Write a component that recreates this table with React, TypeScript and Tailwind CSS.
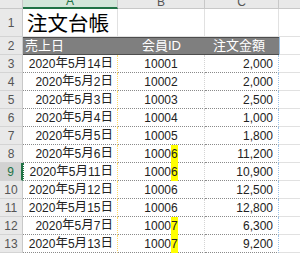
import React from 'react';

interface Order {
  date: string;
  id: string;
  mark?: boolean;
  amount: string;
}

const orders: Order[] = [
  { date: '2020年5月14日', id: '10001', amount: '2,000' },
  { date: '2020年5月2日', id: '10002', amount: '2,000' },
  { date: '2020年5月3日', id: '10003', amount: '2,500' },
  { date: '2020年5月4日', id: '10004', amount: '1,000' },
  { date: '2020年5月5日', id: '10005', amount: '1,800' },
  { date: '2020年5月6日', id: '10006', mark: true, amount: '11,200' },
  { date: '2020年5月11日', id: '10006', mark: true, amount: '10,900' },
  { date: '2020年5月12日', id: '10006', amount: '12,500' },
  { date: '2020年5月15日', id: '10006', amount: '12,800' },
  { date: '2020年5月7日', id: '10007', mark: true, amount: '6,300' },
  { date: '2020年5月13日', id: '10007', mark: true, amount: '9,200' },
];

// CJK glyphs a bit larger than the digits, like Excel's mixed fonts
const Mixed: React.FC<{ text: string }> = ({ text }) => (
  <>
    {text.split(/([^\x00-\x7f]+)/).map((s, i) =>
      /[^\x00-\x7f]/.test(s) ? (
        <span key={i} className="text-[12.5px]">
          {s}
        </span>
      ) : (
        <span key={i}>{s}</span>
      )
    )}
  </>
);

const RowHead: React.FC<{ n: number; h: string; active?: boolean }> = ({ n, h, active }) => (
  <div
    className={`w-[23px] shrink-0 flex items-center justify-center text-[12px] border-b border-[#d4d4d4] ${h} ${
      active
        ? 'bg-[#d2d2d2] text-[#217346] border-r-2 border-r-[#217346]'
        : 'bg-[#e9e9e9] text-[#555] border-r border-r-[#c8c8c8]'
    }`}
  >
    {n}
  </div>
);

export default function App() {
  return (
    <div
      className="w-[300px] h-[253px] overflow-hidden bg-white text-black"
      style={{ fontFamily: '"Liberation Sans", "Noto Sans CJK JP", sans-serif' }}
    >
      {/* column headers, scrolled so only their lower part shows */}
      <div className="flex h-[9px] text-[12px] leading-[12px] text-[#555]">
        <div className="w-[23px] shrink-0 bg-[#e9e9e9] border-r border-b border-[#c8c8c8]" />
        <div className="w-[95px] shrink-0 flex items-end justify-center bg-[#d3e7da] border-r border-[#c8c8c8] border-b-2 border-b-[#217346] text-[#217346] overflow-hidden">
          <span>A</span>
        </div>
        <div className="w-[87px] shrink-0 flex items-end justify-center bg-[#e9e9e9] border-r border-b border-[#c8c8c8] overflow-hidden">
          <span>B</span>
        </div>
        <div className="w-[74px] shrink-0 flex items-end justify-center bg-[#e9e9e9] border-r border-b border-[#c8c8c8] overflow-hidden">
          <span>C</span>
        </div>
        <div className="flex-1 bg-[#e9e9e9] border-b border-[#c8c8c8]" />
      </div>

      {/* row 1: title */}
      <div className="flex">
        <RowHead n={1} h="h-[28px]" />
        <div
          className="w-[95px] shrink-0 h-[28px] flex items-center pl-[4px] text-[20.5px] border-r border-b border-[#e1e1e1]"
          style={{ fontFamily: '"Noto Sans CJK JP", sans-serif' }}
        >
          注文台帳
        </div>
        <div className="w-[87px] shrink-0 h-[28px] border-r border-b border-[#e1e1e1]" />
        <div className="w-[74px] shrink-0 h-[28px] border-r border-b border-[#e1e1e1]" />
        <div className="flex-1 h-[28px] border-b border-[#e1e1e1]" />
      </div>

      {/* row 2: table header */}
      <div className="flex">
        <RowHead n={2} h="h-[18px]" />
        <div className="w-[256px] shrink-0 h-[18px] flex bg-[#7f7f7f] text-white text-[13px] border-y border-[#4d4d4d]">
          <div className="w-[95px] flex items-center pl-[2px]">売上日</div>
          <div className="w-[87px] flex items-center justify-center">会員ID</div>
          <div className="w-[74px] flex items-center justify-center pr-[6px]">注文金額</div>
        </div>
        <div className="flex-1 h-[18px] border-l border-[#9dc3e6] border-b border-b-[#e1e1e1]" />
      </div>

      {/* data rows */}
      {orders.map((o, i) => (
        <div key={i} className="flex">
          <RowHead n={i + 3} h="h-[18px]" active={i === 6} />
          <div
            className={`w-[95px] shrink-0 h-[18px] flex items-center justify-end pr-[4px] text-[12px] text-[#222] border-b border-dotted border-b-[#8a8a8a] border-r border-r-[#ffd966] ${
              i === 6 ? 'border-l border-l-[#217346]' : ''
            }`}
          >
            <Mixed text={o.date} />
          </div>
          <div className="w-[87px] shrink-0 h-[18px] flex items-center justify-center text-[12px] text-[#222] border-b border-dotted border-b-[#8a8a8a] border-r border-r-[#d4d4d4]">
            {o.id.slice(0, 4)}
            <span className={o.mark ? 'bg-[#ffff00]' : ''}>{o.id.slice(4)}</span>
          </div>
          <div className="w-[74px] shrink-0 h-[18px] flex items-center justify-end pr-[5px] text-[12px] text-[#222] border-b border-dotted border-b-[#8a8a8a] border-r border-r-[#9dc3e6]">
            {o.amount}
          </div>
          <div className="flex-1 h-[18px] border-b border-[#e1e1e1]" />
        </div>
      ))}
    </div>
  );
}
